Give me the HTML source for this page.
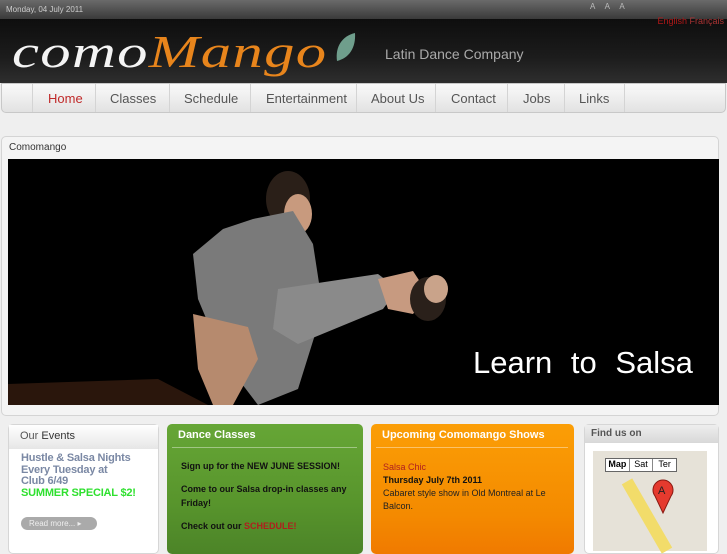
<!DOCTYPE html>
<html><head><meta charset="utf-8"><style>
*{margin:0;padding:0;box-sizing:border-box}
body{width:727px;height:545px;overflow:hidden;background:#efefef;font-family:"Liberation Sans",sans-serif;position:relative}
.top{position:absolute;left:0;top:0;width:727px;height:19px;background:linear-gradient(#6a6a6a,#3a3a3a);}
.top .d{position:absolute;left:6px;top:5px;font-size:8px;color:#ccc}
.top .a{position:absolute;left:590px;top:2px;font-size:8px;color:#bbb;letter-spacing:4px}
.hdr{position:absolute;left:0;top:19px;width:727px;height:64px;background:linear-gradient(#0e0e0e,#1c1c1c 60%,#2e2e2e)}
.lang{position:absolute;right:3px;top:-3px;font-size:9px;color:#b01818}
.lang span{color:#a33}
.logo{position:absolute;left:12px;top:6px;font-family:"Liberation Serif",serif;font-style:italic;font-size:46px;color:#f4f4f4;letter-spacing:1px;transform:scale(1.32,1);transform-origin:0 0;white-space:nowrap}
.logo b{color:#e8851c;font-weight:normal}
.tag{position:absolute;left:385px;top:27px;color:#aaa;font-size:14px}
.nav{position:absolute;left:1px;top:83px;width:725px;height:30px;background:linear-gradient(#fafafa,#e2e2e2);border:1px solid #c8c8c8;border-radius:0 0 5px 5px}
.nav a{position:absolute;top:7px;font-size:13px;color:#555;text-decoration:none}
.nav i{position:absolute;top:0;width:1px;height:28px;background:#d4d4d4}
.main{position:absolute;left:1px;top:136px;width:718px;height:280px;border:1px solid #d4d4d4;border-radius:5px;background:#f4f4f4}
.main .t{position:absolute;left:7px;top:5px;font-size:10px;color:#333}
.pic{position:absolute;left:6px;top:22px;width:711px;height:246px;background:#000;overflow:hidden}
.pic .s{position:absolute;left:465px;top:186px;color:#fff;font-size:31px;word-spacing:10px;font-weight:300}
.box{position:absolute;top:424px;height:130px;border-radius:5px}
.ev{left:8px;width:151px;background:#fff;border:1px solid #d6d6d6}
.ev .h{height:24px;background:linear-gradient(#fff,#e6e6e6);font-size:11px;color:#555;padding:5px 11px}
.gr{left:167px;width:196px;background:linear-gradient(#66a636,#58952c 60%,#4c8428)}
.or{left:371px;width:203px;background:linear-gradient(#fb9e06,#f48a00 70%,#f07a00)}
.gr .h,.or .h{color:#fff;font-size:11px;font-weight:bold;padding:5px 11px 5px 11px;margin:0 6px 0 5px;border-bottom:1px solid rgba(255,255,255,.4);height:24px;padding-left:6px}
.fi{left:584px;width:135px;background:#fff;border:1px solid #d6d6d6}
.fi .h{height:18px;background:linear-gradient(#eee,#d8d8d8);font-size:10px;font-weight:bold;color:#555;padding:3px 6px}
</style></head><body>
<div class="top"><div class="d">Monday, 04 July 2011</div><div class="a">A A A</div></div>
<div class="hdr">
<div class="lang">English <span>Français</span></div>
<div class="logo">como<b>Mango</b></div>
<svg style="position:absolute;left:333px;top:12px" width="24" height="32"><path d="M4 30 C2 16 9 5 22 2 C23 17 16 27 4 30Z" fill="#6f9e8c"/></svg>
<div class="tag">Latin Dance Company</div>
</div>
<div class="nav">
<i style="left:30px"></i><a style="left:46px;color:#c02a2a">Home</a>
<i style="left:93px"></i><a style="left:108px">Classes</a>
<i style="left:167px"></i><a style="left:182px">Schedule</a>
<i style="left:248px"></i><a style="left:264px">Entertainment</a>
<i style="left:354px"></i><a style="left:369px">About Us</a>
<i style="left:433px"></i><a style="left:449px">Contact</a>
<i style="left:505px"></i><a style="left:521px">Jobs</a>
<i style="left:562px"></i><a style="left:577px">Links</a>
<i style="left:622px"></i>
</div>
<div class="main"><div class="t">Comomango</div>
<div class="pic">
<svg width="711" height="246" style="position:absolute;left:0;top:0">
<ellipse cx="280" cy="40" rx="22" ry="28" fill="#2a1f18"/>
<ellipse cx="290" cy="55" rx="14" ry="20" fill="#c89a7e"/>
<polygon points="245,60 285,52 305,85 315,150 290,230 250,246 215,200 190,140 185,95 215,70" fill="#7a7a7a"/>
<polygon points="270,130 370,115 390,130 375,150 290,185 265,170" fill="#8a8a8a"/>
<polygon points="370,120 405,112 420,135 405,155 380,150" fill="#c79a80"/>
<ellipse cx="420" cy="140" rx="18" ry="22" fill="#2a201a"/>
<ellipse cx="428" cy="130" rx="12" ry="14" fill="#c9a38a"/>
<polygon points="185,155 240,168 250,200 225,246 205,246 190,210" fill="#b68a6e"/>
<polygon points="0,225 150,220 200,246 0,246" fill="#2a160c"/>
</svg>
<div class="s">Learn to Salsa</div></div></div>
<div class="box ev"><div class="h">Our <span style="color:#333">Events</span></div>
<div style="padding:4px 12px;font-size:11px;font-weight:bold;color:#7a88a4;line-height:11.5px;white-space:nowrap;letter-spacing:-0.2px">Hustle &amp; Salsa Nights<br>Every Tuesday at<br>Club 6/49<br><span style="color:#2fe02f">SUMMER SPECIAL $2!</span></div>
<div style="margin:14px 0 0 12px;width:76px;height:13px;border-radius:7px;background:#aaa;color:#eee;font-size:8px;padding:2px 8px">Read more... ▸</div></div>
<div class="box gr"><div class="h">Dance Classes</div>
<div style="padding:0 14px;font-size:9px;font-weight:bold;color:#111;line-height:14px">
<div style="margin-top:11px">Sign up for the NEW JUNE SESSION!</div>
<div style="margin-top:9px">Come to our Salsa drop-in classes any Friday!</div>
<div style="margin-top:9px">Check out our <span style="color:#b01e1e">SCHEDULE!</span></div></div></div>
<div class="box or"><div class="h">Upcoming Comomango Shows</div>
<div style="padding:0 12px;font-size:9px;color:#222;line-height:13px;margin-top:13px">
<div style="color:#b02020">Salsa Chic</div><div style="font-weight:bold;color:#111">Thursday July 7th 2011</div><div>Cabaret style show in Old Montreal at Le Balcon.</div></div></div>
<div class="box fi"><div class="h">Find us on</div>
<div style="position:absolute;left:8px;top:26px;width:114px;height:100px;background:#e6e2d8">
<div style="position:absolute;left:12px;top:7px;width:72px;height:14px;background:#fff;border:1px solid #666;font-size:9px;display:flex"><span style="flex:1;text-align:center;font-weight:bold;border-right:1px solid #888">Map</span><span style="flex:1;text-align:center;border-right:1px solid #888">Sat</span><span style="flex:1;text-align:center">Ter</span></div>
<div style="position:absolute;left:48px;top:25px;width:12px;height:80px;background:#f2dc6a;transform:rotate(-30deg)"></div>
<svg style="position:absolute;left:59px;top:27px" width="22" height="36"><path d="M11 35 L3 18 A10 10 0 1 1 19 18Z" fill="#e53a2e" stroke="#8a1a12"/><text x="6" y="16" font-size="11" font-family="Liberation Sans" fill="#222">A</text></svg>
</div></div>
</body></html>
